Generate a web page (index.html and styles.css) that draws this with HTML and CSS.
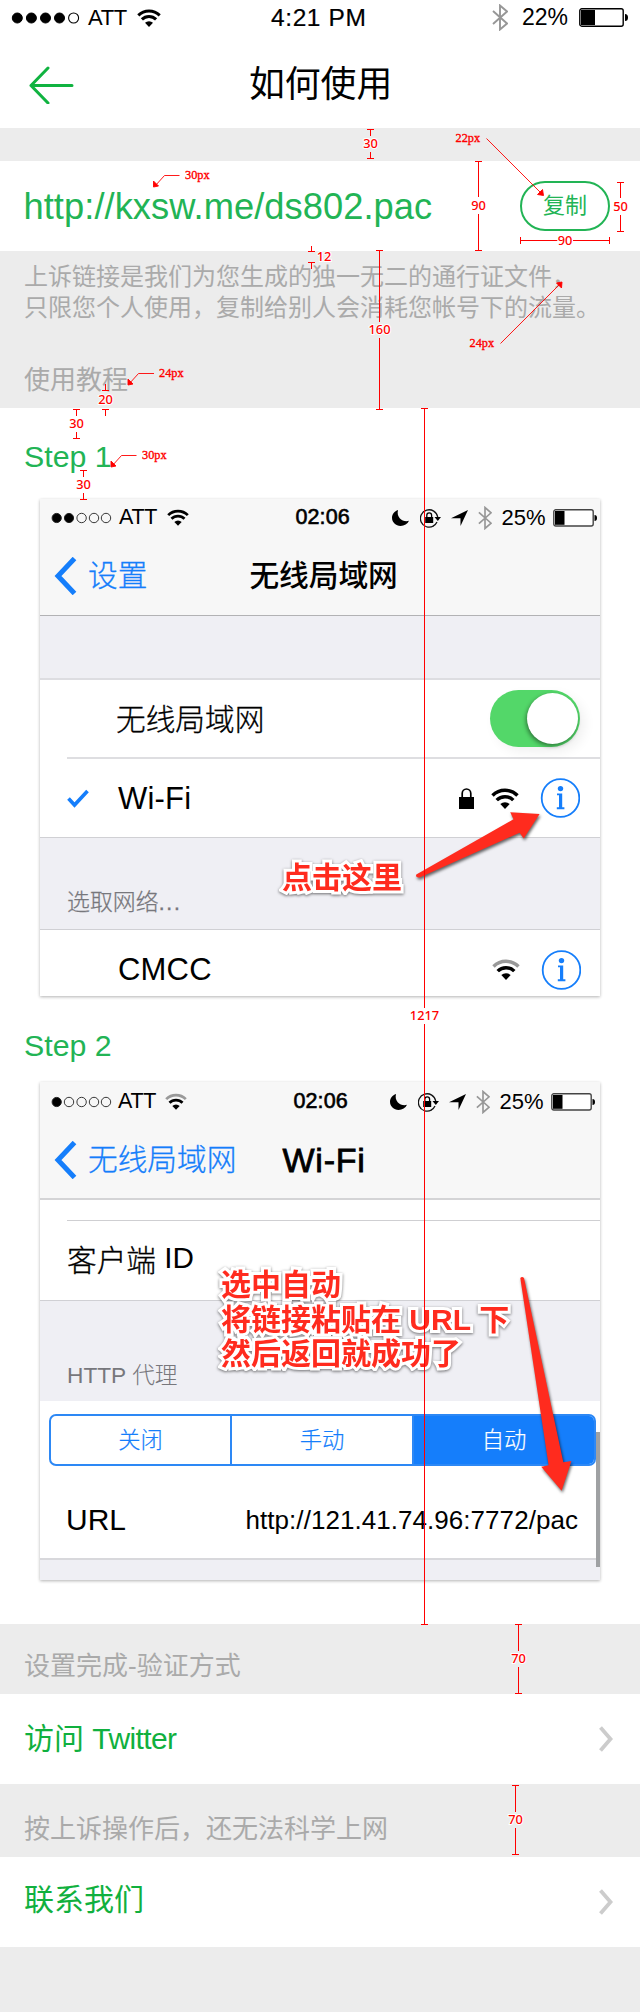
FILE: index.html
```html
<!DOCTYPE html>
<html lang="zh-CN">
<head>
<meta charset="utf-8">
<title>如何使用</title>
<link rel="stylesheet" href="styles.css">
</head>
<body>
<svg class="defs" width="0" height="0" aria-hidden="true">
  <symbol id="wifi" viewBox="0 0 24 18"><path class="arc-outer" d="M1.3 6.4A15.2 15.2 0 0 1 22.7 6.4" fill="none" stroke-width="3"/><path d="M4.9 10.4A10 10 0 0 1 19.1 10.4" fill="none" stroke="#000" stroke-width="3"/><path d="M12 18L8 13.8A5.7 5.7 0 0 1 16 13.8Z"/></symbol>
  <symbol id="bt" viewBox="0 0 16 27"><path d="M1 7L15 19.5L8 25.5V1.5L15 7.5L1 20" fill="none" stroke="#979797" stroke-width="1.9"/></symbol>
  <symbol id="battery" viewBox="0 0 49 19"><rect x=".8" y=".8" width="43.4" height="17.4" rx="2" fill="#fff" stroke="#000" stroke-width="1.4"/><rect x="2" y="2" width="14" height="15"/><path d="M46 6Q49 6 49 9.5T46 13Z"/></symbol>
  <symbol id="battery-s" viewBox="0 0 44 18"><rect x=".8" y=".8" width="39.4" height="16.2" rx="2" fill="#fff" stroke="#444" stroke-width="1.4"/><rect x="2" y="2" width="9.5" height="13.8"/><path d="M41.5 6Q44 6 44 9T41.5 12Z"/></symbol>
  <symbol id="moon" viewBox="0 0 17 16"><path d="M6 0C2.500 1.200 0 4.300 0 7.800C0 12.400 3.800 16 8.600 16C12.300 16 15.500 14 17 10.800C11.500 12.600 4 8 6 0Z"/></symbol>
  <symbol id="rotlock" viewBox="0 0 22 20"><path d="M13.5 18A8.7 8.7 0 1 1 17.7 9" fill="none" stroke="#111" stroke-width="1.3"/><path d="M13 18.2A9 9 0 0 0 17 14" fill="none" stroke="#111" stroke-width="1.3"/><path d="M14.5 9H21L17.8 13Z"/><rect x="5.2" y="9" width="8" height="6"/><path d="M6.8 9V7.2A2.4 2.4 0 0 1 11.6 7.2V9" fill="none" stroke="#000" stroke-width="1.3"/></symbol>
  <symbol id="loc" viewBox="0 0 17 16"><path d="M17 0L9.5 16V8.2H0Z"/></symbol>
  <symbol id="info" viewBox="0 0 40 40"><circle cx="20.500" cy="20" r="18.800" fill="none" stroke="#157efb" stroke-width="1.8"/><circle cx="20.500" cy="10.600" r="2.700" fill="#157efb"/><path d="M17 15.400H22.200V29.300H24.400V31.200H16.800V29.300H19V17.300H17Z" fill="#157efb"/></symbol>
  <symbol id="back" viewBox="0 0 24 38"><path d="M20.5 1.5L4 19L20.5 36.5" fill="none" stroke="#157efb" stroke-width="5"/></symbol>
  <symbol id="next" viewBox="0 0 14 26"><path d="M1.5 1.5L11.5 13L1.5 24.5" fill="none" stroke="#ccc" stroke-width="3.8"/></symbol>
</svg>

<main class="page">
  <div class="status">
    <svg class="dots" width="69" height="12"><g stroke="#000"><circle cx="6.3" cy="6" r="5"/><circle cx="20.4" cy="6" r="5"/><circle cx="34.5" cy="6" r="5"/><circle cx="48.5" cy="6" r="5"/><circle cx="62.6" cy="6" r="5" fill="none" stroke-width="1.1"/></g></svg>
    <span class="carrier">ATT</span>
    <svg class="full" width="24" height="18"><use href="#wifi"/></svg>
    <span class="time">4:21 PM</span>
    <svg class="st-bt" width="16" height="27"><use href="#bt"/></svg>
    <span class="pct">22%</span>
    <svg width="49" height="19"><use href="#battery"/></svg>
  </div>
  <header class="nav">
    <svg class="back" width="46" height="38"><path d="M20 2L3 19.5L20 37M3 19.5H44" fill="none" stroke="#10b340" stroke-width="3" stroke-linecap="round" stroke-linejoin="round"/></svg>
    <h1>如何使用</h1>
  </header>

  <section class="link-row">
    <span class="link">http://kxsw.me/ds802.pac</span>
    <button class="copy">复制</button>
  </section>

  <section class="intro">
    <p>上诉链接是我们为您生成的独一无二的通行证文件，<br>只限您个人使用，复制给别人会消耗您帐号下的流量。</p>
    <h2>使用教程</h2>
  </section>

  <section class="steps">
    <h3>Step 1</h3>
    <div class="card card-one">
      <div class="mini-status">
        <svg class="dots" width="56" height="12"><g stroke="#222"><circle cx="5.7" cy="6" r="4.6" fill="#000"/><circle cx="18" cy="6" r="4.6" fill="#000"/><g fill="none" stroke-width=".9"><circle cx="30.6" cy="6" r="4.7"/><circle cx="43" cy="6" r="4.7"/><circle cx="55" cy="6" r="4.7"/></g></g></svg>
        <span class="carrier">ATT</span>
        <svg class="full" width="22" height="17"><use href="#wifi"/></svg>
        <span class="time">02:06</span>
        <svg class="i-moon" width="17" height="16"><use href="#moon"/></svg>
        <svg class="i-rot" width="22" height="20"><use href="#rotlock"/></svg>
        <svg class="i-loc" width="17" height="16"><use href="#loc"/></svg>
        <svg class="i-bt" width="14" height="24"><use href="#bt"/></svg>
        <span class="pct">25%</span>
        <svg width="44" height="18"><use href="#battery-s"/></svg>
      </div>
      <div class="mini-nav">
        <svg width="24" height="38"><use href="#back"/></svg>
        <span class="mini-back">设置</span>
        <strong class="title-cn">无线局域网</strong>
      </div>
      <div class="spacer"></div>
      <div class="row row-switch"><span>无线局域网</span><span class="toggle"><i></i></span></div>
      <div class="row row-wifi">
        <svg width="22" height="19"><path d="M1.5 9.5L7.5 16L20.5 2" fill="none" stroke="#157efb" stroke-width="3.6"/></svg>
        <span class="ssid">Wi-Fi</span>
        <svg width="15" height="21"><rect y="9" width="15" height="12"/><path d="M3.2 10V5.5A4.3 4.5 0 0 1 11.8 5.5V10" fill="none" stroke="#000" stroke-width="1.7"/></svg>
        <svg class="full sig" width="28" height="21"><use href="#wifi"/></svg>
        <svg class="inf" width="40" height="40"><use href="#info"/></svg>
      </div>
      <div class="band band-one">选取网络<span class="ell">...</span></div>
      <div class="row row-cmcc">
        <span class="ssid">CMCC</span>
        <svg class="weak sig" width="28" height="21"><use href="#wifi"/></svg>
        <svg class="inf" width="40" height="40"><use href="#info"/></svg>
      </div>
      <div class="callout callout-one">点击这里</div>
      <svg class="arrows" width="560" height="497"><path d="M376.3 375.5L473.5 320.3L470.2 313.3L499.6 315L483.7 339.5L479.6 333.7L379.6 378.5Q375 379 376.3 375.5Z"/></svg>
    </div>

    <h3 class="second">Step 2</h3>
    <div class="card card-two">
      <div class="mini-status">
        <svg class="dots" width="56" height="12"><g stroke="#222"><circle cx="5.7" cy="6" r="4.6" fill="#000"/><g fill="none" stroke-width=".9"><circle cx="18" cy="6" r="4.7"/><circle cx="30.6" cy="6" r="4.7"/><circle cx="43" cy="6" r="4.7"/><circle cx="55" cy="6" r="4.7"/></g></g></svg>
        <span class="carrier">ATT</span>
        <svg class="weak" width="22" height="17"><use href="#wifi"/></svg>
        <span class="time">02:06</span>
        <svg class="i-moon" width="17" height="16"><use href="#moon"/></svg>
        <svg class="i-rot" width="22" height="20"><use href="#rotlock"/></svg>
        <svg class="i-loc" width="17" height="16"><use href="#loc"/></svg>
        <svg class="i-bt" width="14" height="24"><use href="#bt"/></svg>
        <span class="pct">25%</span>
        <svg width="44" height="18"><use href="#battery-s"/></svg>
      </div>
      <div class="mini-nav">
        <svg width="24" height="38"><use href="#back"/></svg>
        <span class="mini-back">无线局域网</span>
        <strong class="title-en">Wi-Fi</strong>
      </div>
      <div class="sliver"></div>
      <div class="row row-client">客户端 <span class="id">ID</span></div>
      <div class="band band-two">HTTP 代理</div>
      <div class="segments"><span>关闭</span><span>手动</span><span class="on">自动</span></div>
      <div class="row row-url"><span>URL</span><span class="val">http://121.41.74.96:7772/pac</span></div>
      <div class="tail"></div>
      <div class="scroll"></div>
      <div class="callout callout-two">选中自动<br>将链接粘贴在 <b>URL</b> 下<br>然后返回就成功了</div>
      <svg class="arrows" width="560" height="498"><path d="M480.3 196Q482 194 484 196L523.3 380.3L531.4 379L521.6 408.7L501.2 384.7L508.6 383.3Z"/></svg>
    </div>
  </section>

  <h2 class="group group-a">设置完成-验证方式</h2>
  <div class="item"><span>访问 <span class="lat">Twitter</span></span><svg width="14" height="26"><use href="#next"/></svg></div>
  <h2 class="group group-b">按上诉操作后，还无法科学上网</h2>
  <div class="item item-b"><span>联系我们</span><svg width="14" height="26"><use href="#next"/></svg></div>

  <!-- spacing and type-size annotations -->
  <svg class="spec" width="640" height="2012" viewBox="0 0 640 2012">
    <g class="dim">
      <path d="M367 129.5h7M370.5 129v7M370.5 152v7M367 158.5h7"/>
      <path d="M475 161.5h7M478.5 161v36M478.5 214v37M475 250.5h7"/>
      <path d="M617 182.5h7M620.5 182v16M620.5 215v16M617 231.5h7"/>
      <path d="M520.5 237v7M609.5 237v7M520.5 240.5h37M573 240.5h37"/>
      <path d="M311.5 246v5M308 251.5h7M308 262.5h7M311.5 263v6"/>
      <path d="M376 250.5h7M379.5 250v72M379.5 338v72M376 409.5h7"/>
      <path d="M105.5 384v7M102 390.5h7M102 409.5h7M105.5 410v6"/>
      <path d="M73 409.5h7M76.5 410v6M76.5 432v7M73 438.5h7"/>
      <path d="M80 470.5h7M83.5 471v6M83.5 493v7M80 499.5h7"/>
      <path d="M421 408.5h7M424.5 408v600M424.5 1024v601M421 1624.5h7"/>
      <path d="M515 1624.5h7M518.5 1624v27M518.5 1667v27M515 1693.5h7"/>
      <path d="M512 1785.5h7M515.5 1785v27M515.5 1828v27M512 1854.5h7"/>
    </g>
    <g class="leader">
      <path d="M486.5 138.5L542 194M500.5 343.5L560 284"/>
      <path d="M179.5 175.5H164.5L155 186M154 373.5H138.5L129 384M136.5 455.5H121.5L112 466"/>
      <g class="head"><path d="M543.5 195.5l-1-6-5 5zM562 282l-5.500 1 5 5zM153.500 187v-6l5 5zM128 385v-6l5 5zM111 467v-6l5 5z"/></g>
    </g>
    <g class="num">
      <text x="370.500" y="148">30</text><text x="478.500" y="210">90</text><text x="620.500" y="211">50</text><text x="565" y="245">90</text><text x="324" y="261">12</text><text x="379.500" y="334">160</text><text x="105.500" y="404">20</text><text x="76.500" y="428">30</text><text x="83.500" y="489">30</text><text x="424.500" y="1020">1217</text><text x="518.500" y="1663">70</text><text x="515.500" y="1824">70</text>
    </g>
    <g class="size">
      <text x="455.500" y="142">22px</text><text x="185" y="179">30px</text><text x="469.500" y="347">24px</text><text x="159" y="377">24px</text><text x="142" y="459">30px</text>
    </g>
  </svg>
</main>
</body>
</html>
```
FILE: styles.css
```css
* { box-sizing: border-box; margin: 0; padding: 0; }
body {
  width: 640px;
  background: #ececec;
  font-family: "Liberation Sans", "Noto Sans CJK SC", sans-serif;
  color: #000;
}
h1, h2, h3 { font-weight: 400; }
svg { display: block; flex: none; }
span, strong { white-space: nowrap; }
.defs { position: absolute; }
.page { position: relative; height: 2012px; overflow: hidden; }
.full { --o: #000; }
.weak { --o: #999; }
.arc-outer { stroke: var(--o); }

.status { display: flex; align-items: center; height: 35px; padding-left: 11px; background: #fff; }
.status .carrier { width: 49px; margin-left: 8px; font-size: 22px; letter-spacing: -.4px; }
.status .time { width: 221px; padding: 0 0 0 110px; font-size: 24.500px; letter-spacing: .6px; -webkit-text-stroke: .2px #000; }
.status .st-bt { margin: 0 14px 0 110px; }
.status .pct { width: 57px; font-size: 23px; }

.nav { display: flex; align-items: center; height: 93px; padding-left: 28px; background: #fff; }
.nav .back { margin-top: 7px; }
.nav h1 { margin: 6px 0 0 175px; font-size: 35.800px; line-height: 50px; }

.link-row { display: flex; align-items: center; justify-content: space-between; height: 90px; margin-top: 33px; padding: 2px 30px 0 23.500px; background: #fff; }
.link { color: #22b455; font-size: 36.300px; letter-spacing: .05px; }
.copy { width: 90px; height: 50px; margin-top: -2px; border: 2px solid #22b455; border-radius: 25px; background: #fff; color: #22b455; font: 22px/46px "Liberation Sans", "Noto Sans CJK SC", sans-serif; }

.intro { height: 157px; padding: 10px 0 0 24px; color: #aaa; }
.intro p { font-size: 24px; line-height: 31px; }
.intro h2 { margin-top: 42px; font-size: 26px; line-height: 30px; }

.steps { height: 1216px; padding-top: 34px; background: #fff; }
.steps h3 { margin-left: 24px; color: #22b455; font-size: 30.300px; line-height: 30px; }
.steps .second { margin-top: 35px; }

.card { position: relative; width: 560px; margin: 27px 0 0 40px; background: #fff; box-shadow: 0 1px 3px rgba(0,0,0,.3); }
.card-one { height: 497px; }
.card-two { height: 498px; margin-top: 21px; }
.mini-status { display: flex; align-items: center; height: 37px; padding-left: 11px; background: #f7f7f7; }
.card-two .mini-status { height: 39px; }
.mini-status .dots { overflow: visible; }
.mini-status .carrier { width: 48px; margin-left: 12px; font-size: 21.500px; letter-spacing: -.3px; }
.mini-status .time { width: 96px; margin-left: 106.500px; font-size: 21.500px; letter-spacing: .1px; -webkit-text-stroke: .6px #000; }
.i-rot { margin-left: 11px; }
.i-loc { margin-left: 9px; }
.i-bt { margin-left: 10px; }
.mini-status .pct { width: 51px; margin-left: 10px; font-size: 22px; }
.card-two .carrier { width: 47px; margin-left: 11px; }

.mini-nav { display: flex; align-items: center; height: 80px; padding-left: 14px; background: #f7f7f7; border-bottom: 1px solid #b2b2b4; font-size: 29.700px; line-height: 40px; }
.card-two .mini-nav { height: 79px; border-bottom: 2px solid #d4d4d6; }
.mini-back { margin-left: 10px; color: #157efb; font-weight: 300; -webkit-text-stroke: .3px; }
.title-cn { margin-left: 102px; font-weight: 500; }
.title-en { margin-left: 46px; font-size: 34px; font-weight: 400; letter-spacing: .8px; -webkit-text-stroke: .8px #000; }

.spacer { height: 64px; background: #efeff4; border-bottom: 2px solid #dddde1; }
.row { display: flex; align-items: center; background: #fff; }
.row-switch { height: 79px; margin-left: 27px; padding: 0 20px 2px 49px; justify-content: space-between; border-bottom: 2px solid #dedee1; font-size: 29.700px; font-weight: 300; -webkit-text-stroke: .3px; }
.toggle { width: 90px; height: 57px; margin-top: 2px; padding: 3px 2px; border-radius: 29px; background: #53d769; box-shadow: 5px 5px 12px rgba(0,0,0,.06); }
.toggle i { display: block; width: 51px; height: 51px; margin-left: auto; border-radius: 50%; background: #fff; box-shadow: -1px 2px 4px rgba(0,0,0,.45); }
.row-wifi { height: 78px; padding-left: 27px; }
.ssid { font-size: 31px; letter-spacing: .2px; }
.row-wifi .ssid { width: 341px; margin: 2px 0 0 29px; }
.sig { margin-left: 17px; }
.inf { margin-left: 21px; }
.band { background: #efeff4; color: #77777c; font-weight: 300; -webkit-text-stroke: .25px; }
.band-one { height: 93px; padding: 48px 0 0 27px; border-top: 1px solid #d0d0d4; border-bottom: 1px solid #d0d0d4; font-size: 22.900px; line-height: 32px; }
.ell { letter-spacing: 1.200px; }
.row-cmcc { height: 66px; padding: 13px 0 0 78px; }
.row-cmcc .ssid { width: 357px; }

.sliver { height: 21px; margin-left: 27px; border-bottom: 1px solid #cfcfd2; }
.row-client { height: 79px; padding: 0 0 5px 27px; font-size: 29.700px; font-weight: 300; white-space: pre; -webkit-text-stroke: .3px; }
.id { -webkit-text-stroke: 0; }
.band-two { height: 101px; padding: 58px 0 0 27px; border-top: 1px solid #d0d0d4; font-size: 22.700px; line-height: 32px; -webkit-text-stroke: 0; }
.segments { display: grid; grid-template-columns: 179px 182px 1fr; width: 547px; height: 52px; margin: 13px 0 0 9px; border: 2px solid #2d88f5; border-radius: 7px; overflow: hidden; color: #157efb; font-size: 22.300px; font-weight: 300; line-height: 49px; text-align: center; -webkit-text-stroke: .2px; }
.segments span + span { border-left: 2px solid #2d88f5; }
.segments .on { background: #157efb; color: #fff; }
.row-url { height: 92px; padding: 16px 22px 0 26px; justify-content: space-between; font-size: 30px; }
.val { font-size: 26px; letter-spacing: .05px; }
.tail { height: 22px; background: #efeff4; border-top: 2px solid #d8d8dc; }
.scroll { position: absolute; right: 0; top: 350px; width: 4px; height: 135px; background: #9fa1a3; }

.callout { position: absolute; color: #ff2b1e; font-size: 30px; font-weight: 700; line-height: 34.500px; white-space: nowrap; paint-order: stroke fill; -webkit-text-stroke: 6px #fff; filter: drop-shadow(0 1px 1.500px rgba(0,0,0,.55)); }
.callout-one { left: 242px; top: 362px; }
.callout-two { left: 181px; top: 186px; }
.arrows { position: absolute; left: 0; top: 0; fill: #ff2b1e; filter: drop-shadow(1px 2px 1.500px rgba(0,0,0,.6)); }

.group { height: 70px; padding: 28px 0 0 24px; color: #aaa; font-size: 26px; line-height: 28px; }
.group-b { height: 73px; padding-top: 31px; }
.item { display: flex; align-items: center; justify-content: space-between; height: 90px; padding: 0 27px 0 24px; background: #fff; color: #10b03e; font-size: 30px; line-height: 40px; }
.lat { letter-spacing: -.6px; }
.item-b > span { margin-top: -5px; }

.spec { position: absolute; left: 0; top: 0; }
.dim { fill: none; stroke: #f00; stroke-width: 1; }
.leader { fill: none; stroke: #f00; stroke-width: .9; }
.head { fill: #f00; }
.num { fill: #f00; font: 500 12.800px "Noto Sans", sans-serif; text-anchor: middle; paint-order: stroke fill; stroke: #fff; stroke-width: 2px; }
.size { fill: #f00; font: 12.300px "Liberation Serif", serif; stroke: #f00; stroke-width: .35px; }
```
